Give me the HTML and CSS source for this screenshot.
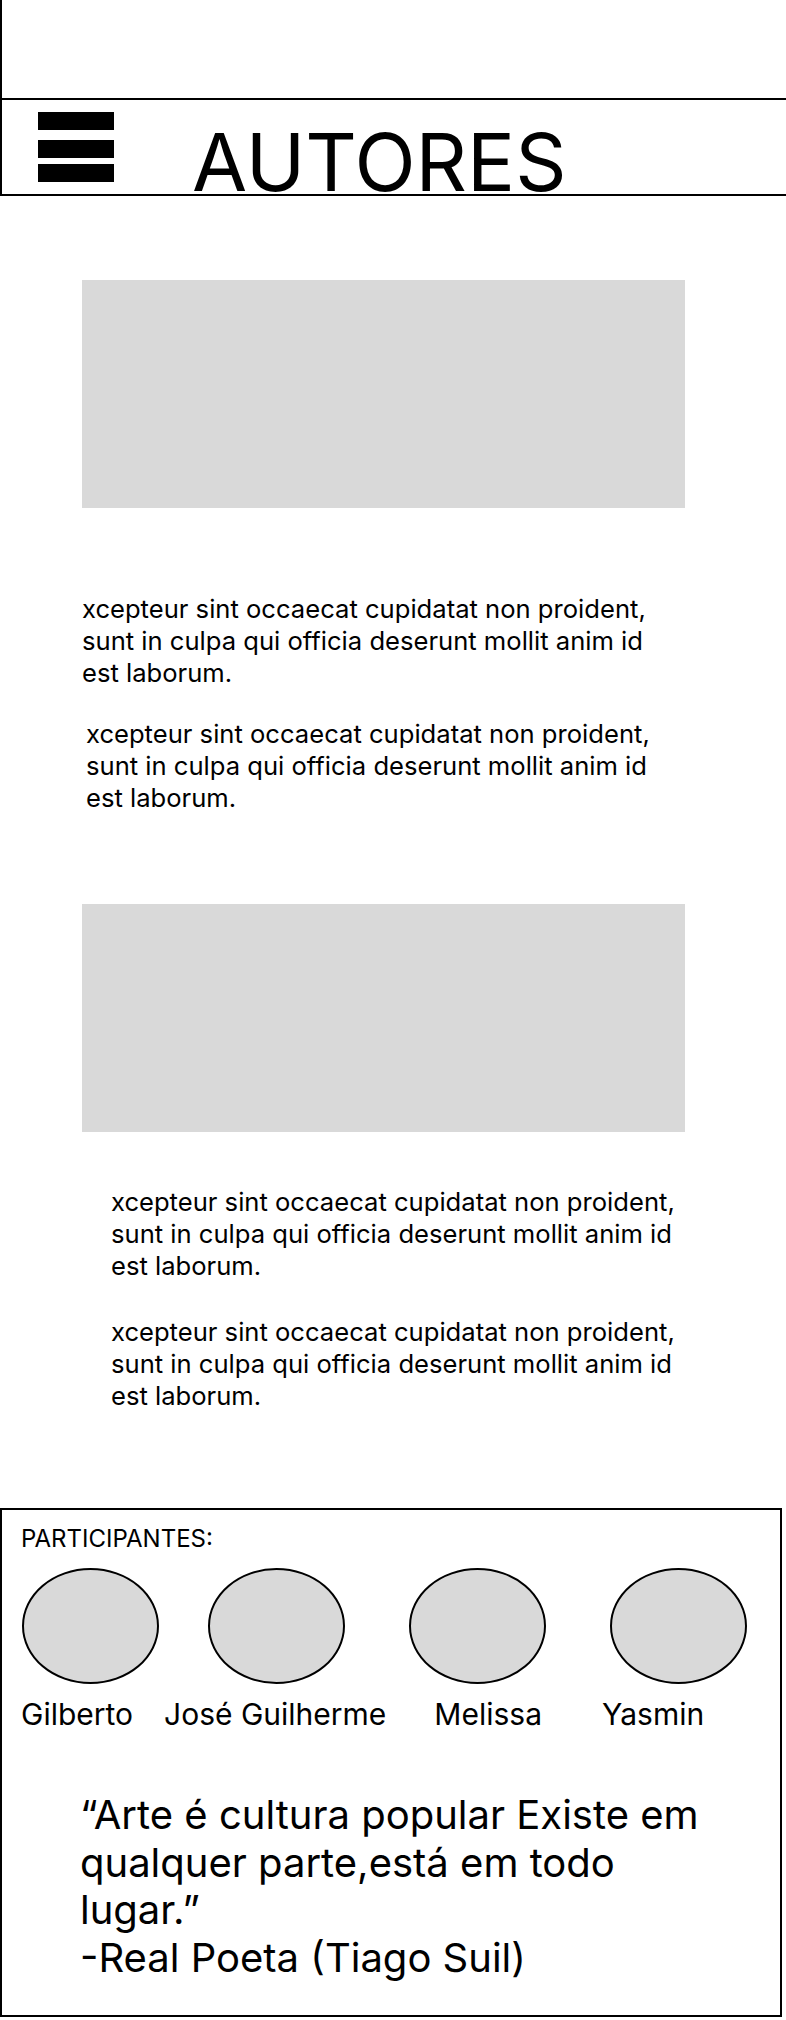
FILE: index.html
```html
<!DOCTYPE html>
<html lang="pt-BR">
<head>
<meta charset="utf-8">
<title>Autores</title>
<link rel="stylesheet" href="styles.css">
</head>
<body>
<header class="site-header">
  <div class="header-top"></div>
  <nav class="nav">
    <div class="burger" aria-label="menu">
      <span class="bar"></span>
      <span class="bar bar-2"></span>
      <span class="bar bar-3"></span>
    </div>
    <h1 class="title">AUTORES</h1>
  </nav>
</header>

<main class="main">
  <div class="placeholder first"></div>
  <p class="text t1">xcepteur sint occaecat cupidatat non proident, sunt in culpa qui officia deserunt mollit anim id est laborum.</p>
  <p class="text t2">xcepteur sint occaecat cupidatat non proident, sunt in culpa qui officia deserunt mollit anim id est laborum.</p>
  <div class="placeholder second"></div>
  <p class="text t3">xcepteur sint occaecat cupidatat non proident, sunt in culpa qui officia deserunt mollit anim id est laborum.</p>
  <p class="text t4">xcepteur sint occaecat cupidatat non proident, sunt in culpa qui officia deserunt mollit anim id est laborum.</p>
</main>

<section class="participants">
  <h2 class="part-title">PARTICIPANTES:</h2>
  <div class="avatars">
    <div class="avatar a1"></div>
    <div class="avatar a2"></div>
    <div class="avatar a3"></div>
    <div class="avatar a4"></div>
  </div>
  <div class="names">
    <span class="name n1">Gilberto</span>
    <span class="name n2">José Guilherme</span>
    <span class="name n3">Melissa</span>
    <span class="name n4">Yasmin</span>
  </div>
  <blockquote class="quote">“Arte é cultura popular Existe em qualquer parte,está em todo lugar.”<br>-Real Poeta (Tiago Suil)</blockquote>
</section>
</body>
</html>
```

FILE: styles.css
```css
html, body {
  margin: 0;
  padding: 0;
  background: #fff;
}
body {
  width: 786px;
  font-family: Inter, "Noto Sans", sans-serif;
  color: #000;
  overflow-x: hidden;
}

/* header */
.site-header {
  border-left: 2px solid #000;
}
.header-top {
  height: 98px;
}
.nav {
  height: 94px;
  border-top: 2px solid #000;
  border-bottom: 2px solid #000;
  display: flex;
  align-items: flex-start;
  padding-left: 36px;
}
.burger {
  width: 76px;
  margin-top: 12px;
  display: flex;
  flex-direction: column;
}
.bar {
  display: block;
  height: 18px;
  background: #000;
}
.bar-2 { margin-top: 10px; }
.bar-3 { margin-top: 6px; }
.title {
  margin: 22px 0 0 78px;
  font-size: 80px;
  line-height: 80px;
  font-weight: 400;
  white-space: nowrap;
}

/* main */
.main {
  padding-left: 82px;
}
.placeholder {
  width: 603px;
  height: 228px;
  background: #d9d9d9;
}
.placeholder.first { margin-top: 84px; }
.placeholder.second { margin-top: 90px; }

.text {
  width: 582px;
  margin: 0;
  font-size: 25.6px;
  line-height: 32px;
}
.t1 { margin-top: 85px; }
.t2 { margin-top: 29px; margin-left: 4px; }
.t3 { margin-top: 54px; margin-left: 29px; }
.t4 { margin-top: 34px; margin-left: 29px; }

/* participants */
.participants {
  margin-top: 96px;
  width: 778px;
  border: 2px solid #000;
  padding: 14px 0 33px 0;
}
.part-title {
  margin: 0 0 0 19px;
  font-size: 24px;
  line-height: 29px;
  font-weight: 400;
}
.avatars {
  display: flex;
  margin-top: 15px;
  padding-left: 20px;
}
.avatar {
  width: 137px;
  height: 116px;
  box-sizing: border-box;
  border: 2px solid #000;
  border-radius: 50%;
  background: #d9d9d9;
}
.a2 { margin-left: 49px; }
.a3 { margin-left: 64px; }
.a4 { margin-left: 64px; }

.names {
  display: flex;
  margin-top: 12px;
  padding-left: 19px;
  font-size: 30px;
  line-height: 36px;
}
.name { white-space: nowrap; }
.n2 { margin-left: 31px; }
.n3 { margin-left: 48px; }
.n4 { margin-left: 60px; }

.quote {
  margin: 59px 0 0 78px;
  width: 630px;
  font-size: 40px;
  line-height: 47.7px;
}
```
